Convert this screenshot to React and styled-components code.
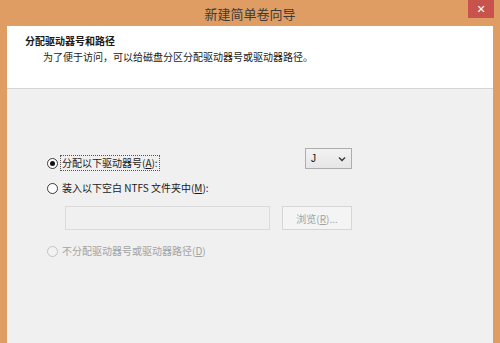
import React from 'react';
import styled, { createGlobalStyle } from 'styled-components';

const GlobalStyle = createGlobalStyle`
  html, body {
    margin: 0;
    padding: 0;
  }
  body {
    font-family: "Noto Sans CJK SC", "Noto Sans", sans-serif;
  }
`;

const Window = styled.div`
  width: 500px;
  height: 343px;
  background: #df9d63;
  display: flex;
  flex-direction: column;
  overflow: hidden;
`;

const TitleBar = styled.div`
  height: 26px;
  flex-shrink: 0;
  position: relative;
  display: flex;
  align-items: center;
  justify-content: center;
  font-size: 13px;
  color: #3b3b3b;
  line-height: 1;
`;

const CloseButton = styled.div`
  position: absolute;
  top: 0;
  right: 6px;
  width: 26px;
  height: 18px;
  background: #c8524c;
  color: #fff;
  display: flex;
  align-items: center;
  justify-content: center;
  font-family: "DejaVu Sans", sans-serif;
  font-size: 11px;
  font-weight: bold;
`;

const Client = styled.div`
  flex: 1;
  margin: 0 7px;
  background: #f0f0f0;
  display: flex;
  flex-direction: column;
`;

const Header = styled.div`
  height: 63px;
  background: #fff;
  border-bottom: 1px solid #d5d5d5;
  box-sizing: border-box;
  padding: 8px 0 0 18px;
  font-size: 10px;
  color: #1a1a1a;
`;

const HeaderTitle = styled.div`
  font-weight: bold;
  line-height: 14px;
`;

const HeaderText = styled.div`
  margin-top: 2px;
  padding-left: 18px;
  line-height: 14px;
`;

const Body = styled.div`
  padding: 59px 0 0 40px;
  display: flex;
  flex-direction: column;
  align-items: flex-start;
`;

const Row = styled.div`
  display: flex;
  align-items: flex-start;
  width: 305px;
  justify-content: space-between;
`;

const PathRow = styled.div`
  display: flex;
  gap: 12px;
  padding-left: 18px;
  margin-top: 11px;
`;

const Radio = styled.label`
  display: flex;
  align-items: center;
  gap: 3px;
  font-size: 10px;
  line-height: 14px;
  color: ${(p) => (p.$disabled ? '#a3a3a3' : '#1a1a1a')};
  margin-top: ${(p) => p.$offset || 0}px;
`;

const Circle = styled.span`
  width: 11px;
  height: 11px;
  flex-shrink: 0;
  border-radius: 50%;
  box-sizing: border-box;
  border: 1px solid ${(p) => (p.$disabled ? '#c4c4c4' : '#3c3c3c')};
  background: ${(p) => (p.$disabled ? '#f2f2f2' : '#fff')};
  display: flex;
  align-items: center;
  justify-content: center;

  &::after {
    content: '';
    width: 5px;
    height: 5px;
    border-radius: 50%;
    background: ${(p) => (p.$checked ? '#111' : 'transparent')};
  }
`;

const Label = styled.span`
  outline: ${(p) => (p.$focused ? '1px dotted #555' : 'none')};
  padding: 0 1px;
`;

const Select = styled.div`
  width: 47px;
  height: 21px;
  box-sizing: border-box;
  border: 1px solid #adadad;
  background: linear-gradient(#f2f2f2, #e6e6e6);
  display: flex;
  align-items: center;
  justify-content: space-between;
  padding: 0 5px;
  font-family: "Liberation Sans", sans-serif;
  font-size: 10px;
  color: #111;
`;

const TextBox = styled.div`
  width: 205px;
  height: 24px;
  box-sizing: border-box;
  border: 1px solid #dadada;
  background: #f0f0f0;
`;

const Button = styled.div`
  width: 70px;
  height: 24px;
  box-sizing: border-box;
  border: 1px solid #d6d6d6;
  background: #f4f4f4;
  display: flex;
  align-items: center;
  justify-content: center;
  font-size: 10px;
  color: #a2a2a2;
`;

const Chevron = () => (
  <svg width="8" height="6" viewBox="0 0 8 6">
    <path d="M1 1.5 L4 4.5 L7 1.5" fill="none" stroke="#333" strokeWidth="1.3" />
  </svg>
);

export default function App() {
  return (
    <>
      <GlobalStyle />
      <Window>
        <TitleBar>
          新建简单卷向导
          <CloseButton>✕</CloseButton>
        </TitleBar>
        <Client>
          <Header>
            <HeaderTitle>分配驱动器号和路径</HeaderTitle>
            <HeaderText>为了便于访问，可以给磁盘分区分配驱动器号或驱动器路径。</HeaderText>
          </Header>
          <Body>
            <Row>
              <Radio $offset={8}>
                <Circle $checked />
                <Label $focused>
                  分配以下驱动器号(<u>A</u>):
                </Label>
              </Radio>
              <Select>
                J
                <Chevron />
              </Select>
            </Row>
            <Radio $offset={11}>
              <Circle />
              <Label>
                装入以下空白 NTFS 文件夹中(<u>M</u>):
              </Label>
            </Radio>
            <PathRow>
              <TextBox />
              <Button>
                <span>
                  浏览(<u>R</u>)...
                </span>
              </Button>
            </PathRow>
            <Radio $disabled $offset={14}>
              <Circle $disabled />
              <Label>
                不分配驱动器号或驱动器路径(<u>D</u>)
              </Label>
            </Radio>
          </Body>
        </Client>
      </Window>
    </>
  );
}
